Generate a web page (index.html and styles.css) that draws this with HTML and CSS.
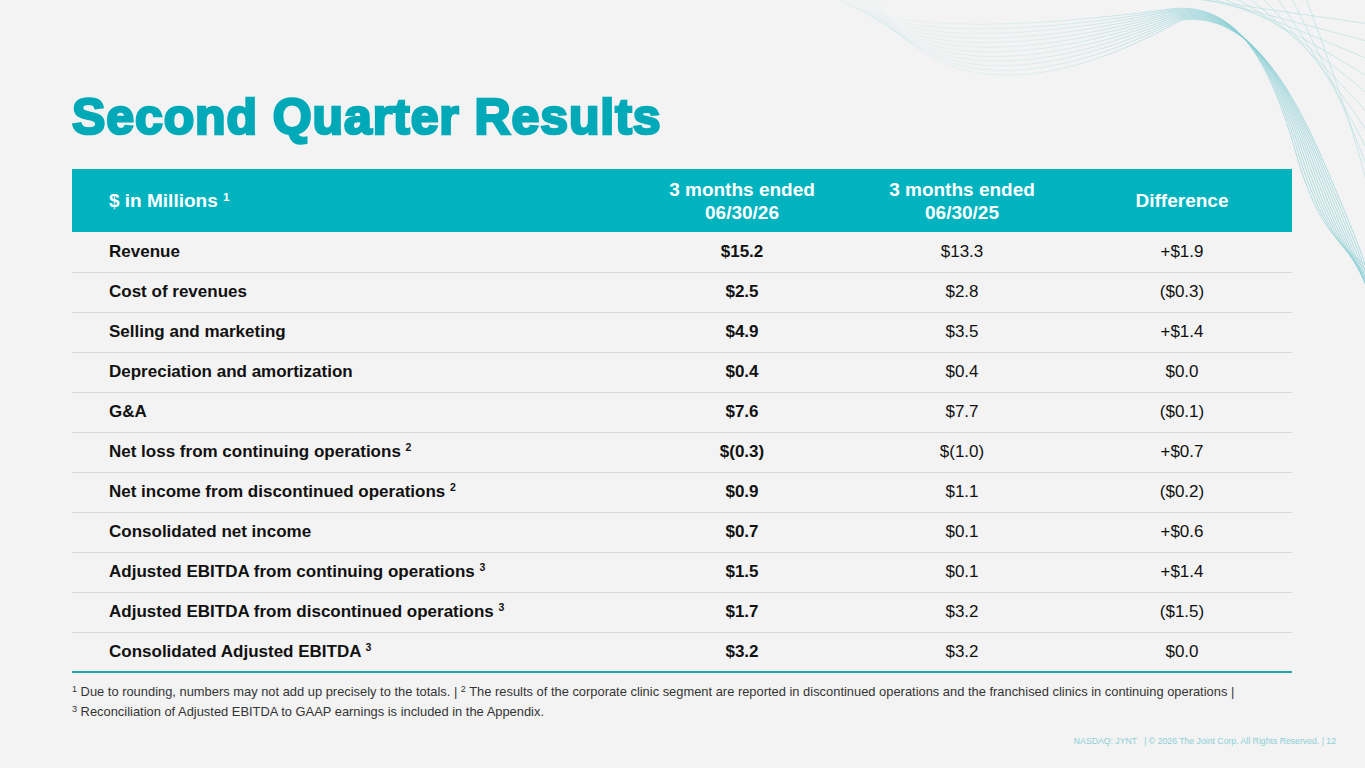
FILE: index.html
```html
<!DOCTYPE html>
<html lang="en">
<head>
<meta charset="utf-8">
<title>Second Quarter Results</title>
<link rel="stylesheet" href="styles.css">
</head>
<body>
<div class="slide">
  <svg class="waves" width="1365" height="340" viewBox="0 0 1365 340" aria-hidden="true">
    <defs>
      <linearGradient id="fadeA" gradientUnits="userSpaceOnUse" x1="830" y1="0" x2="1220" y2="0">
        <stop offset="0" stop-color="#a6dce0" stop-opacity="0.12"/>
        <stop offset="0.6" stop-color="#8fd3d9" stop-opacity="0.4"/>
        <stop offset="1" stop-color="#7fcbd2" stop-opacity="0.85"/>
      </linearGradient>
    </defs>
    <g fill="none" stroke="url(#fadeA)" stroke-width="0.7">
      <path d="M830,-5 C880,30 1000,32 1170,9 C1240,0 1272,70 1295,150 S1340,245 1372,270"/>
      <path d="M834,-5 C884,36 1004,38 1171,10 C1241,1 1274,72 1298,152 S1343,248 1372,275"/>
      <path d="M838,-5 C888,42 1008,44 1172,11 C1242,2 1276,74 1301,154 S1346,251 1372,280"/>
      <path d="M842,-5 C892,48 1012,50 1173,12 C1243,3 1278,76 1304,156 S1349,254 1372,285"/>
      <path d="M846,-5 C896,54 1016,56 1174,13 C1244,4 1280,78 1307,158 S1352,257 1372,290"/>
      <path d="M850,-5 C900,60 1020,62 1175,14 C1245,5 1282,80 1310,160 S1355,260 1372,295"/>
      <path d="M854,-5 C904,66 1024,68 1176,15 C1246,6 1284,82 1313,162 S1358,263 1372,300"/>
      <path d="M858,-5 C908,72 1028,74 1177,16 C1247,7 1286,84 1316,164 S1361,266 1372,305"/>
      <path d="M862,-5 C912,78 1032,80 1178,17 C1248,8 1288,86 1319,166 S1364,269 1372,310"/>
      <path d="M866,-5 C916,84 1036,86 1179,18 C1249,9 1290,88 1322,168 S1367,272 1374,315"/>
      <path d="M870,-5 C920,90 1040,92 1180,19 C1250,10 1292,90 1325,170 S1370,275 1376,320"/>
      <path d="M874,-5 C924,96 1044,98 1181,20 C1251,11 1294,92 1328,172 S1373,278 1378,325"/>
    </g>
    <g fill="none" stroke="#9dd7dc" stroke-width="0.7" stroke-opacity="0.65">
      <path d="M1170,-5 C1230,4 1300,14 1370,24"/>
      <path d="M1185,-5 C1245,8 1310,26 1370,42"/>
      <path d="M1200,-5 C1255,12 1320,38 1370,60"/>
      <path d="M1215,-5 C1265,16 1325,50 1370,78"/>
      <path d="M1230,-5 C1275,20 1330,62 1370,96"/>
      <path d="M1245,-5 C1285,26 1335,76 1370,116"/>
      <path d="M1260,-5 C1295,32 1340,90 1370,136"/>
      <path d="M1275,-5 C1305,38 1345,104 1370,156"/>
      <path d="M1290,-5 C1315,44 1350,118 1370,176"/>
      <path d="M1305,-5 C1325,50 1355,132 1370,196"/>
    </g>
  </svg>

  <h1 class="title">Second Quarter Results</h1>

  <table class="results">
    <thead>
      <tr>
        <th class="label">$ in Millions <sup>1</sup></th>
        <th>3 months ended<br>06/30/26</th>
        <th>3 months ended<br>06/30/25</th>
        <th>Difference</th>
      </tr>
    </thead>
    <tbody>
      <tr><td class="label">Revenue</td><td class="cur">$15.2</td><td>$13.3</td><td>+$1.9</td></tr>
      <tr><td class="label">Cost of revenues</td><td class="cur">$2.5</td><td>$2.8</td><td>($0.3)</td></tr>
      <tr><td class="label">Selling and marketing</td><td class="cur">$4.9</td><td>$3.5</td><td>+$1.4</td></tr>
      <tr><td class="label">Depreciation and amortization</td><td class="cur">$0.4</td><td>$0.4</td><td>$0.0</td></tr>
      <tr><td class="label">G&amp;A</td><td class="cur">$7.6</td><td>$7.7</td><td>($0.1)</td></tr>
      <tr><td class="label">Net loss from continuing operations <sup>2</sup></td><td class="cur">$(0.3)</td><td>$(1.0)</td><td>+$0.7</td></tr>
      <tr><td class="label">Net income from discontinued operations <sup>2</sup></td><td class="cur">$0.9</td><td>$1.1</td><td>($0.2)</td></tr>
      <tr><td class="label">Consolidated net income</td><td class="cur">$0.7</td><td>$0.1</td><td>+$0.6</td></tr>
      <tr><td class="label">Adjusted EBITDA from continuing operations <sup>3</sup></td><td class="cur">$1.5</td><td>$0.1</td><td>+$1.4</td></tr>
      <tr><td class="label">Adjusted EBITDA from discontinued operations <sup>3</sup></td><td class="cur">$1.7</td><td>$3.2</td><td>($1.5)</td></tr>
      <tr class="last"><td class="label">Consolidated Adjusted EBITDA <sup>3</sup></td><td class="cur">$3.2</td><td>$3.2</td><td>$0.0</td></tr>
    </tbody>
  </table>

  <div class="notes">
    <p><sup>1</sup> Due to rounding, numbers may not add up precisely to the totals. | <sup>2</sup> The results of the corporate clinic segment are reported in discontinued operations and the franchised clinics in continuing operations |</p>
    <p><sup>3</sup> Reconciliation of Adjusted EBITDA to GAAP earnings is included in the Appendix.</p>
  </div>

  <div class="footer">NASDAQ: JYNT &nbsp; | © 2026 The Joint Corp. All Rights Reserved. | 12</div>
</div>
</body>
</html>
```

FILE: styles.css
```css
html, body {
  margin: 0;
  padding: 0;
  background: #f3f3f3;
}

.slide {
  position: relative;
  width: 1365px;
  height: 768px;
  overflow: hidden;
  background: #f3f3f3;
  padding: 92px 0 0 72px;
  box-sizing: border-box;
  font-family: "Liberation Sans", Arial, sans-serif;
  color: #111;
}

.waves {
  position: absolute;
  top: 0;
  left: 0;
  pointer-events: none;
}

.title {
  position: relative;
  margin: 0;
  font-size: 50px;
  line-height: 50px;
  font-weight: 700;
  letter-spacing: 0.9px;
  color: #00a9b7;
  -webkit-text-stroke: 2.6px #00a9b7;
}

.results {
  position: relative;
  margin-top: 27px;
  width: 1220px;
  border-collapse: collapse;
  table-layout: fixed;
}

.results th,
.results td {
  box-sizing: border-box;
  padding: 0;
  text-align: center;
  width: 220px;
}

.results th.label,
.results td.label {
  width: 560px;
  text-align: left;
  padding-left: 37px;
}

.results thead th {
  background: #00b3bf;
  color: #fff;
  height: 63px;
  font-size: 19px;
  line-height: 23px;
  font-weight: 700;
  vertical-align: middle;
}

.results tbody td {
  height: 40px;
  font-size: 17px;
  border-bottom: 1px solid #d9d9d9;
  vertical-align: middle;
}

.results tbody td.label,
.results tbody td.cur {
  font-weight: 700;
}

.results tbody tr.last td {
  height: 40px;
  border-bottom: 2px solid #1fa9b3;
}

.results sup {
  font-size: 0.62em;
  line-height: 0;
  vertical-align: 0.55em;
}

.notes {
  margin-top: 9px;
  font-size: 12.9px;
  line-height: 20px;
  color: #333;
}

.notes p {
  margin: 0;
}

.notes sup {
  font-size: 0.7em;
  line-height: 0;
  vertical-align: 0.45em;
}

.footer {
  margin-top: 13px;
  width: 1264px;
  text-align: right;
  font-size: 8.7px;
  line-height: 12px;
  color: #8ccfd6;
}
```
